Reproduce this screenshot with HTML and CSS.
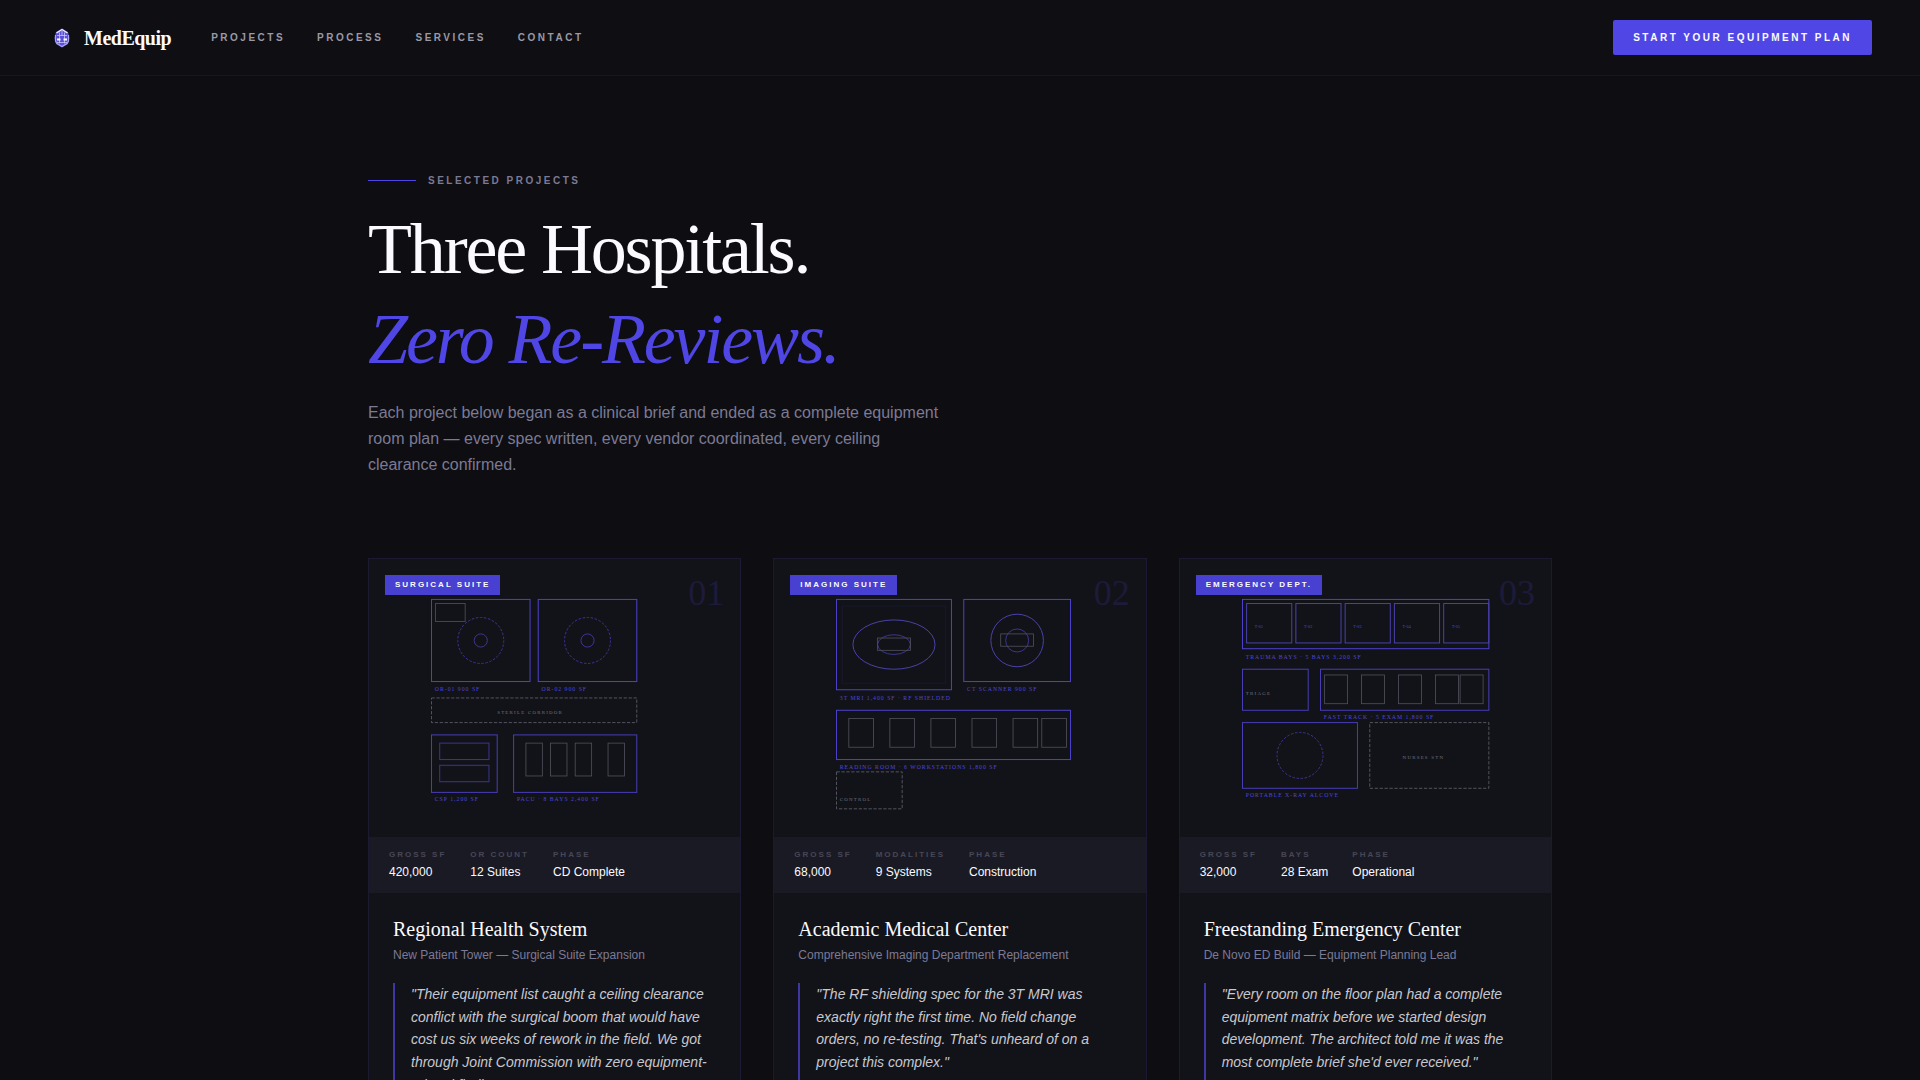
FILE: index.html
```html
<!DOCTYPE html>
<html lang="en">
<head>
<meta charset="utf-8">
<meta name="viewport" content="width=device-width, initial-scale=1">
<title>MedEquip — Selected Projects</title>
<link rel="stylesheet" href="styles.css">
</head>
<body>
<header class="site-header">
  <a class="brand" href="#">
    <svg class="brand-mark" viewBox="0 0 28 28" aria-hidden="true">
      <path d="M14 4.500 20 8 21.500 14 20 20 14 23.500 8 20 6.500 14 8 8Z" fill="#5b50d8"/>
      <path d="M8.500 9 14 5.500 19.500 9" fill="none" stroke="#f0efff" stroke-width="1.400"/>
      <path d="M7.500 11v6L9 19.500 14 22.500 19 19.500 20.500 17v-6" fill="none" stroke="#a9a3f0" stroke-width="1.200"/>
      <path d="M9 11.500h10M9 18.500h10M11.500 8.500v11M14 7v5M16.500 8.500v11" fill="none" stroke="#c9c5fa" stroke-width=".8"/>
      <path d="M9 15.500h3.500M15.500 15.500H19" stroke="#fff" stroke-width="1.800"/>
    </svg>
    <span class="brand-name">MedEquip</span>
  </a>
  <nav class="site-nav" aria-label="Main">
    <a href="#projects">Projects</a>
    <a href="#process">Process</a>
    <a href="#services">Services</a>
    <a href="#contact">Contact</a>
  </nav>
  <button class="cta" type="button">Start Your Equipment Plan</button>
</header>

<main class="projects" id="projects">
  <p class="eyebrow">Selected Projects</p>
  <h1 class="title">Three Hospitals.<br><em>Zero Re-Reviews.</em></h1>
  <p class="lead">Each project below began as a clinical brief and ended as a complete equipment room plan — every spec written, every vendor coordinated, every ceiling clearance confirmed.</p>

  <div class="cards">
    <article class="card">
      <div class="plan">
        <svg class="plan-drawing" viewBox="0 0 340 280" role="img" aria-label="Surgical suite floor plan">
          <g class="room">
            <rect x="20" y="20" width="120" height="100"/>
            <rect x="150" y="20" width="120" height="100"/>
          </g>
          <g class="room room-soft">
            <rect x="20" y="185" width="80" height="70"/>
            <rect x="120" y="185" width="150" height="70"/>
          </g>
          <g class="gear">
            <circle class="dashed" cx="80" cy="70" r="28"/>
            <circle cx="80" cy="70" r="8"/>
            <circle class="dashed" cx="210" cy="70" r="28"/>
            <circle cx="210" cy="70" r="8"/>
            <rect x="30" y="195" width="60" height="20"/>
            <rect x="30" y="222" width="60" height="20"/>
          </g>
          <g class="fixture">
            <rect x="25" y="25" width="36" height="22"/>
            <rect x="135" y="195" width="20" height="40"/>
            <rect x="165" y="195" width="20" height="40"/>
            <rect x="195" y="195" width="20" height="40"/>
            <rect x="235" y="195" width="20" height="40"/>
          </g>
          <rect class="zone" x="20" y="140" width="250" height="30"/>
          <text class="label" x="24" y="131">OR-01 900 SF</text>
          <text class="label" x="154" y="131">OR-02 900 SF</text>
          <text class="note" x="100" y="159">STERILE CORRIDOR</text>
          <text class="label" x="24" y="266">CSP 1,200 SF</text>
          <text class="label" x="124" y="266">PACU · 8 BAYS 2,400 SF</text>
        </svg>
        <span class="tag">Surgical Suite</span>
        <span class="number">01</span>
      </div>
      <dl class="stats">
        <div><dt>Gross SF</dt><dd>420,000</dd></div>
        <div><dt>OR Count</dt><dd>12 Suites</dd></div>
        <div><dt>Phase</dt><dd>CD Complete</dd></div>
      </dl>
      <div class="card-body">
        <h2>Regional Health System</h2>
        <p class="scope">New Patient Tower — Surgical Suite Expansion</p>
        <blockquote>"Their equipment list caught a ceiling clearance conflict with the surgical boom that would have cost us six weeks of rework in the field. We got through Joint Commission with zero equipment-related findings."</blockquote>
      </div>
    </article>

    <article class="card">
      <div class="plan">
        <svg class="plan-drawing" viewBox="0 0 340 280" role="img" aria-label="Imaging suite floor plan">
          <g class="room">
            <rect x="20" y="20" width="140" height="110"/>
            <rect x="175" y="20" width="130" height="100"/>
            <rect x="20" y="155" width="285" height="60"/>
          </g>
          <rect class="shield" x="27" y="28" width="126" height="94"/>
          <g class="scanner">
            <ellipse cx="90" cy="75" rx="50" ry="30"/>
            <circle cx="240" cy="70" r="32"/>
          </g>
          <g class="gear">
            <ellipse cx="90" cy="75" rx="20" ry="12"/>
            <circle cx="240" cy="70" r="14"/>
          </g>
          <g class="fixture">
            <rect x="70" y="67" width="40" height="15"/>
            <rect x="220" y="62" width="40" height="15"/>
            <rect x="35" y="165" width="30" height="35"/>
            <rect x="85" y="165" width="30" height="35"/>
            <rect x="135" y="165" width="30" height="35"/>
            <rect x="185" y="165" width="30" height="35"/>
            <rect x="235" y="165" width="30" height="35"/>
            <rect x="270" y="165" width="30" height="35"/>
          </g>
          <rect class="zone" x="20" y="230" width="80" height="45"/>
          <text class="label" x="24" y="142">3T MRI 1,400 SF · RF SHIELDED</text>
          <text class="label" x="179" y="131">CT SCANNER 900 SF</text>
          <text class="label" x="24" y="226">READING ROOM · 6 WORKSTATIONS 1,800 SF</text>
          <text class="note" x="24" y="266">CONTROL</text>
        </svg>
        <span class="tag">Imaging Suite</span>
        <span class="number">02</span>
      </div>
      <dl class="stats">
        <div><dt>Gross SF</dt><dd>68,000</dd></div>
        <div><dt>Modalities</dt><dd>9 Systems</dd></div>
        <div><dt>Phase</dt><dd>Construction</dd></div>
      </dl>
      <div class="card-body">
        <h2>Academic Medical Center</h2>
        <p class="scope">Comprehensive Imaging Department Replacement</p>
        <blockquote>"The RF shielding spec for the 3T MRI was exactly right the first time. No field change orders, no re-testing. That's unheard of on a project this complex."</blockquote>
      </div>
    </article>

    <article class="card">
      <div class="plan">
        <svg class="plan-drawing" viewBox="0 0 340 280" role="img" aria-label="Emergency department floor plan">
          <g class="room">
            <rect x="20" y="20" width="300" height="60"/>
          </g>
          <g class="room room-soft">
            <rect x="20" y="105" width="80" height="50"/>
            <rect x="115" y="105" width="205" height="50"/>
            <rect x="20" y="170" width="140" height="80"/>
          </g>
          <g class="scanner">
            <rect x="25" y="25" width="55" height="48"/>
            <rect x="85" y="25" width="55" height="48"/>
            <rect x="145" y="25" width="55" height="48"/>
            <rect x="205" y="25" width="55" height="48"/>
            <rect x="265" y="25" width="55" height="48"/>
          </g>
          <circle class="gear dashed" cx="90" cy="210" r="28"/>
          <g class="fixture">
            <rect x="120" y="112" width="28" height="35"/>
            <rect x="165" y="112" width="28" height="35"/>
            <rect x="210" y="112" width="28" height="35"/>
            <rect x="255" y="112" width="28" height="35"/>
            <rect x="285" y="112" width="28" height="35"/>
          </g>
          <rect class="zone" x="175" y="170" width="145" height="80"/>
          <text class="bay" x="35" y="55">T-01</text>
          <text class="bay" x="95" y="55">T-02</text>
          <text class="bay" x="155" y="55">T-03</text>
          <text class="bay" x="215" y="55">T-04</text>
          <text class="bay" x="275" y="55">T-05</text>
          <text class="label" x="24" y="92">TRAUMA BAYS · 5 BAYS 3,200 SF</text>
          <text class="note" x="24" y="137">TRIAGE</text>
          <text class="label" x="119" y="166">FAST TRACK · 5 EXAM 1,800 SF</text>
          <text class="note" x="215" y="214">NURSES STN</text>
          <text class="label" x="24" y="261">PORTABLE X-RAY ALCOVE</text>
        </svg>
        <span class="tag">Emergency Dept.</span>
        <span class="number">03</span>
      </div>
      <dl class="stats">
        <div><dt>Gross SF</dt><dd>32,000</dd></div>
        <div><dt>Bays</dt><dd>28 Exam</dd></div>
        <div><dt>Phase</dt><dd>Operational</dd></div>
      </dl>
      <div class="card-body">
        <h2>Freestanding Emergency Center</h2>
        <p class="scope">De Novo ED Build — Equipment Planning Lead</p>
        <blockquote>"Every room on the floor plan had a complete equipment matrix before we started design development. The architect told me it was the most complete brief she'd ever received."</blockquote>
      </div>
    </article>
  </div>
</main>
</body>
</html>
```
FILE: styles.css
```css
:root {
  --bg: #0d0d12;
  --panel: #121319;
  --bar: #1a1a24;
  --line: #1c1a32;
  --accent: #4f46e5;
  --white: #fafaff;
  --muted: #7c7a94;
  --sans: "Liberation Sans", Arial, sans-serif;
  --serif: "Liberation Serif", "Times New Roman", serif;
}

* { box-sizing: border-box; }

body {
  margin: 0;
  background: var(--bg);
  color: var(--white);
  font-family: var(--sans);
}

h1, h2, p, dl, dd, blockquote { margin: 0; }

.site-header {
  display: flex;
  align-items: center;
  padding: 20px 48px;
  border-bottom: 1px solid #171624;
  background: #0e0e13;
}

.brand {
  display: flex;
  align-items: center;
  gap: 8px;
  color: var(--white);
  text-decoration: none;
}

.brand-mark { width: 28px; height: 28px; }

.brand-name {
  font: 700 20px/28px var(--serif);
  letter-spacing: -0.025em;
}

.site-nav {
  display: flex;
  gap: 32px;
  margin-left: 40px;
}

.site-nav a {
  color: #9a99a6;
  font-size: 10px;
  font-weight: 700;
  line-height: 16px;
  letter-spacing: 0.25em;
  text-transform: uppercase;
  text-decoration: none;
}

.cta {
  margin-left: auto;
  padding: 10px 20px;
  border: 0;
  border-radius: 2px;
  background: var(--accent);
  color: var(--white);
  font: 700 10px/15px var(--sans);
  letter-spacing: 0.25em;
  text-transform: uppercase;
}

.projects {
  max-width: 1280px;
  margin: 0 auto;
  padding: 96px 48px;
}

.eyebrow {
  display: flex;
  align-items: center;
  gap: 12px;
  color: var(--muted);
  font-size: 10px;
  font-weight: 700;
  line-height: 17px;
  letter-spacing: 0.25em;
  text-transform: uppercase;
}

.eyebrow::before {
  content: "";
  width: 48px;
  height: 1px;
  background: var(--accent);
}

.title {
  margin-top: 15px;
  font: 400 72px/90px var(--serif);
  letter-spacing: -0.03em;
}

.title em { color: var(--accent); }

.lead {
  max-width: 576px;
  margin-top: 16px;
  color: var(--muted);
  font-size: 16px;
  line-height: 26px;
}

.cards {
  display: grid;
  grid-template-columns: repeat(3, 1fr);
  gap: 32px;
  margin-top: 80px;
}

.card {
  display: flex;
  flex-direction: column;
  border: 1px solid var(--line);
  background: var(--panel);
}

.plan {
  position: relative;
  padding: 24px;
}

.plan-drawing {
  display: block;
  width: 100%;
  aspect-ratio: 45 / 32;
  fill: none;
  font-family: var(--serif);
}

.room { stroke: #4d43cc; stroke-width: 1.2; }
.room-soft { stroke: #483eb8; }
.scanner { stroke: #4a42a8; stroke-width: 1.2; }
.gear { stroke: #3d3591; stroke-width: 1.2; }
.shield { stroke: #1b1936; }
.fixture { stroke: #50505a; stroke-width: 1; }
.zone { stroke: #62626c; stroke-width: 1; stroke-dasharray: 4 2; }
.dashed { stroke-dasharray: 3 2; }
.label { fill: #5147d8; font-size: 7px; letter-spacing: 0.175em; }
.note { fill: #74747e; font-size: 6px; letter-spacing: 0.25em; }
.bay { fill: #5147d8; font-size: 5px; letter-spacing: 0.05em; }

.tag {
  position: absolute;
  top: 16px;
  left: 16px;
  padding: 4px 10px;
  background: #4840d0;
  font-size: 8px;
  font-weight: 700;
  line-height: 12px;
  letter-spacing: 2px;
  text-transform: uppercase;
}

.number {
  position: absolute;
  top: 12px;
  right: 16px;
  color: #1d1a3a;
  font: 400 36px/44px var(--serif);
}

.stats {
  display: flex;
  gap: 24px;
  padding: 12px 20px;
  background: var(--bar);
}

.stats dt {
  color: #484756;
  font-size: 8px;
  font-weight: 700;
  line-height: 12px;
  letter-spacing: 2px;
  text-transform: uppercase;
}

.stats dd {
  margin-top: 2px;
  font-size: 12px;
  line-height: 18px;
}

.card-body {
  display: flex;
  flex: 1;
  flex-direction: column;
  padding: 24px;
}

.card-body h2 {
  font: 400 20px/24px var(--serif);
}

.scope {
  margin-top: 6px;
  color: var(--muted);
  font-size: 12px;
  line-height: 16px;
}

.card-body blockquote {
  flex: 1;
  margin-top: 20px;
  padding-left: 16px;
  border-left: 2px solid #3f37a4;
  color: #c8c8ce;
  font-size: 14px;
  font-style: italic;
  line-height: 1.625;
}
```
